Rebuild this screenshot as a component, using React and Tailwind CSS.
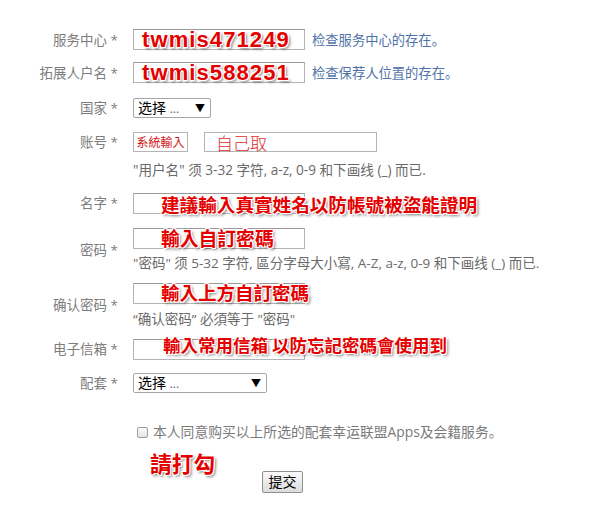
import React from "react";

const cjk = "font-['Open_Sans','Noto_Sans_CJK_SC',sans-serif]";
const redTc =
  "font-['Noto_Sans_CJK_TC',sans-serif] font-bold text-[#e40000] [text-shadow:-1px_-1px_0_#fff,1px_-1px_0_#fff,-1px_1px_0_#fff,1px_1px_0_#fff,2px_2px_3px_rgba(0,0,0,0.55)] whitespace-nowrap";
const redEn =
  "font-['Liberation_Sans',sans-serif] font-bold text-[#e40000] [text-shadow:-1px_-1px_0_#fff,1px_-1px_0_#fff,-1px_1px_0_#fff,1px_1px_0_#fff,2px_2px_3px_rgba(0,0,0,0.55)] whitespace-nowrap";

function Label({ children }) {
  return (
    <div className="w-[118px] shrink-0 text-right text-[13.5px] leading-[18px] text-[#7d7d7d] whitespace-nowrap">
      {children} *
    </div>
  );
}

function Box({ className = "", children }) {
  return (
    <div
      className={
        "relative h-[21px] border border-[#b4b4b4] border-t-[#9a9a9a] bg-white " +
        className
      }
    >
      {children}
    </div>
  );
}

function Select({ w }) {
  return (
    <div
      className={
        "flex h-[20px] items-center justify-between rounded-[2px] border border-[#a6a6a6] bg-white pl-[4px] pr-[5px] text-[14px] leading-[18px] text-black " +
        w
      }
    >
      <span>选择 <span className="text-[#666] text-[12px]">...</span></span>
      <span className="text-[10px] leading-none">▼</span>
    </div>
  );
}

export default function App() {
  return (
    <div className={"min-h-[505px] w-[596px] bg-white pt-[29px] " + cjk}>
      {/* 服务中心 */}
      <div className="flex h-[21px] items-center">
        <Label>服务中心</Label>
        <Box className="ml-[15px] w-[172px]">
          <span className={"absolute left-[8px] top-[-1px] h-[22px] text-[22px] leading-[22px] tracking-[1.1px] " + redEn}>
            twmis471249
          </span>
        </Box>
        <span className="ml-[7px] text-[13.3px] leading-[18px] text-[#4f73a8]">检查服务中心的存在。</span>
      </div>

      {/* 拓展人户名 */}
      <div className="mt-[12px] flex h-[21px] items-center">
        <Label>拓展人户名</Label>
        <Box className="ml-[15px] w-[172px]">
          <span className={"absolute left-[8px] top-[-1px] h-[22px] text-[22px] leading-[22px] tracking-[1.1px] " + redEn}>
            twmis588251
          </span>
        </Box>
        <span className="ml-[7px] text-[13.3px] leading-[18px] text-[#4f73a8]">检查保荐人位置的存在。</span>
      </div>

      {/* 国家 */}
      <div className="mt-[15px] flex h-[20px] items-center">
        <Label>国家</Label>
        <div className="ml-[15px]">
          <Select w="w-[78px]" />
        </div>
      </div>

      {/* 账号 */}
      <div className="mt-[14px] flex h-[20px] items-center">
        <Label>账号</Label>
        <div className="ml-[15px] flex h-[20px] w-[55px] items-center justify-center border border-[#b4b4b4] text-[12px] leading-none text-[#d01818] font-['Noto_Sans_CJK_TC',sans-serif]">
          系統輸入
        </div>
        <div className="ml-[16px] flex h-[20px] w-[173px] items-center border border-[#b4b4b4] pl-[11px] text-[17px] leading-none text-[#d8302c] font-['Noto_Sans_CJK_TC',sans-serif] font-light">
          自己取
        </div>
      </div>
      <div className="mt-[10px] flex h-[16px] items-center">
        <div className="w-[133px] shrink-0" />
        <span className="text-[13.6px] leading-[16px] text-[#6a6a6a] whitespace-nowrap">
          "用户名" 须 3-32 字符, a-z, 0-9 和下画线 (_) 而已.
        </span>
      </div>

      {/* 名字 */}
      <div className="mt-[15px] flex h-[20px] items-center">
        <Label>名字</Label>
        <Box className="ml-[15px] h-[20px] w-[172px]">
          <span className={"absolute left-[27px] top-[-2px] h-[24px] text-[18.6px] leading-[24px] " + redTc}>
            建議輸入真實姓名以防帳號被盜能證明
          </span>
        </Box>
      </div>

      {/* 密码 */}
      <div className="mt-[15px] flex items-center">
        <Label>密码</Label>
        <div className="ml-[15px] flex flex-col">
          <Box className="h-[20px] w-[172px]">
            <span className={"absolute left-[27px] top-[-3px] h-[24px] text-[18.8px] leading-[24px] " + redTc}>
              輸入自訂密碼
            </span>
          </Box>
          <span className="mt-[6px] text-[13.5px] leading-[16px] text-[#6a6a6a] whitespace-nowrap">
            "密码" 须 5-32 字符, 區分字母大小寫, A-Z, a-z, 0-9 和下画线 (_) 而已.
          </span>
        </div>
      </div>

      {/* 确认密码 */}
      <div className="mt-[12px] flex items-center">
        <Label>确认密码</Label>
        <div className="ml-[15px] flex flex-col">
          <Box className="h-[20px] w-[172px]">
            <span className={"absolute left-[27px] top-[-4px] h-[24px] text-[18.5px] leading-[24px] " + redTc}>
              輸入上方自訂密碼
            </span>
          </Box>
          <span className="mt-[7px] text-[13.5px] leading-[16px] text-[#6a6a6a] whitespace-nowrap">
            “确认密码” 必須等于 "密码"
          </span>
        </div>
      </div>

      {/* 电子信箱 */}
      <div className="mt-[12px] flex h-[20px] items-center">
        <Label>电子信箱</Label>
        <Box className="ml-[15px] h-[20px] w-[172px]">
          <span className={"absolute left-[29px] top-[-7px] h-[24px] text-[17.5px] leading-[24px] " + redTc}>
            輸入常用信箱 以防忘記密碼會使用到
          </span>
        </Box>
      </div>

      {/* 配套 */}
      <div className="mt-[14px] flex h-[20px] items-center">
        <Label>配套</Label>
        <div className="ml-[15px]">
          <Select w="w-[134px]" />
        </div>
      </div>

      {/* checkbox */}
      <div className="relative mt-[31px] flex h-[16px] items-center">
        <div className="ml-[137px] h-[11px] w-[11px] rounded-[2px] border border-[#9c9c9c] bg-gradient-to-b from-[#fdfdfd] to-[#e4e4e4]" />
        <span className="ml-[5px] text-[13.8px] leading-[16px] text-[#7a7a7a] whitespace-nowrap">
          本人同意购买以上所选的配套幸运联盟Apps及会籍服务。
        </span>
        <span className={"absolute left-[150px] top-[26px] h-[26px] text-[21.7px] leading-[26px] " + redTc}>
          請打勾
        </span>
      </div>

      {/* submit */}
      <div className="mt-[31px] flex">
        <button className="ml-[262px] h-[22px] w-[41px] rounded-[2px] border border-[#8f8f8f] bg-gradient-to-b from-[#fafafa] to-[#dcdcdc] text-[14px] leading-[18px] text-black">
          提交
        </button>
      </div>
    </div>
  );
}
